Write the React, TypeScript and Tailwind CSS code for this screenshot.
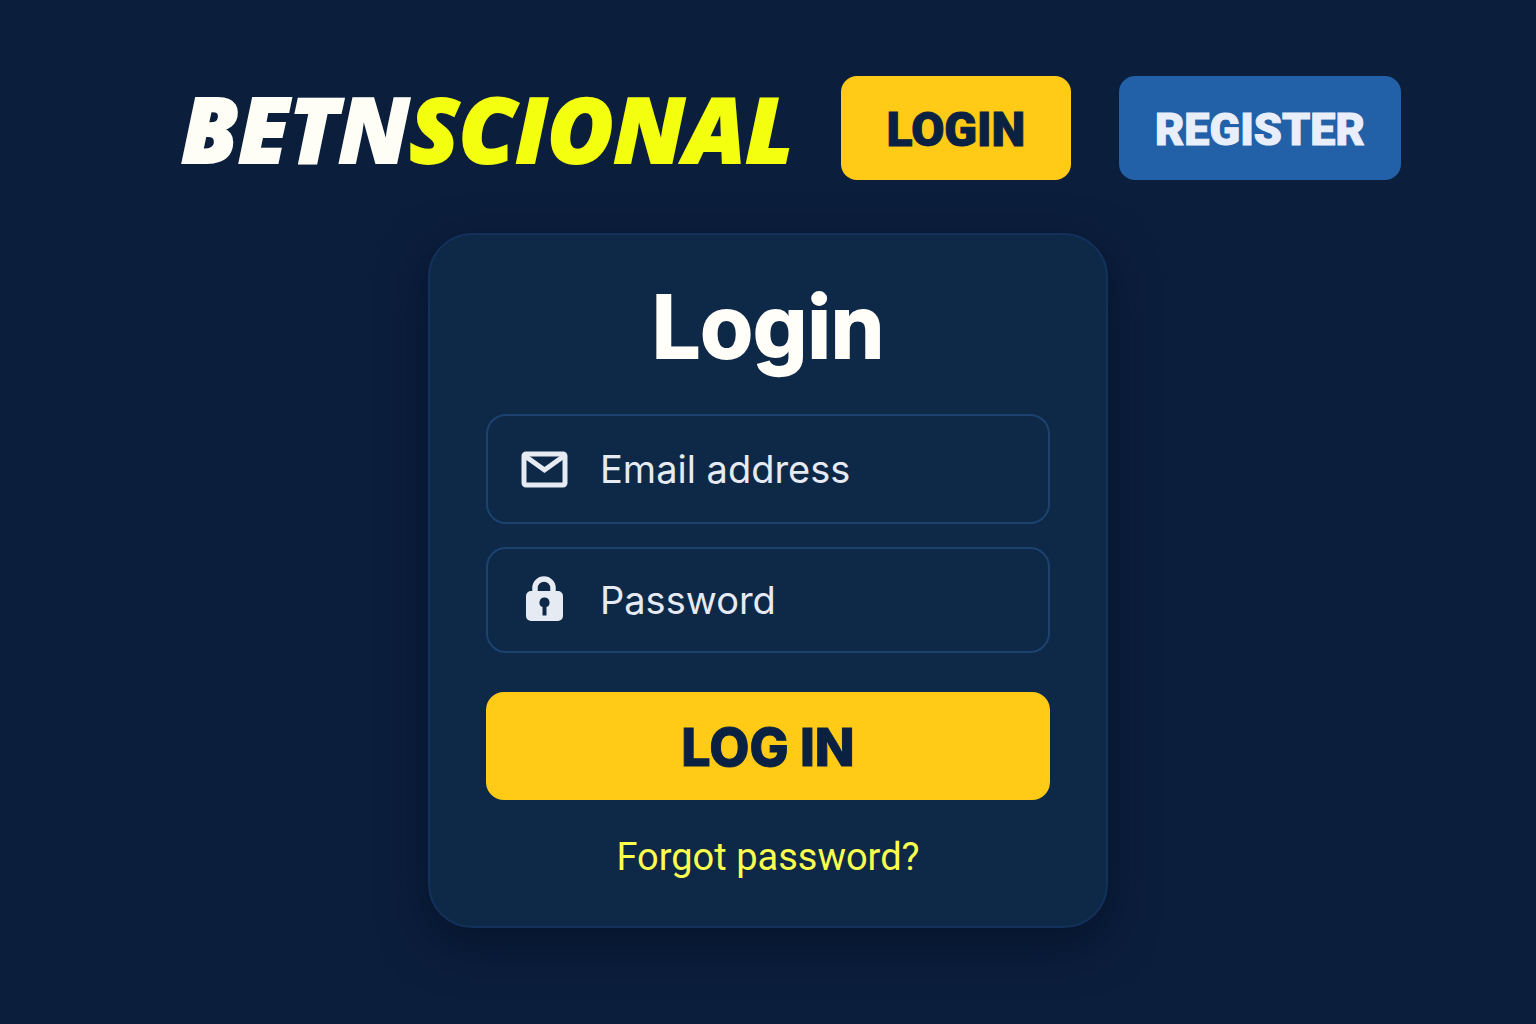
import { useState } from "react";

function MailIcon() {
  return (
    <svg viewBox="0 -1 48 38" className="h-[38px] w-12" aria-hidden="true">
      <rect
        x="4"
        y="3"
        width="41"
        height="31"
        rx="2"
        fill="none"
        stroke="#e6eaf3"
        strokeWidth="5"
      />
      <path
        d="M5 5 24.500 19 44 5"
        fill="none"
        stroke="#e6eaf3"
        strokeWidth="5"
      />
    </svg>
  );
}

function LockIcon() {
  return (
    <svg viewBox="0 2 48 48" className="size-12" aria-hidden="true">
      <path
        d="M15 20v-6a9 9 0 0 1 18 0v6"
        fill="none"
        stroke="#e6eaf3"
        strokeWidth="5.500"
      />
      <path
        fill="#e6eaf3"
        fillRule="evenodd"
        d="M11 17h27a5 5 0 0 1 5 5v20a5 5 0 0 1-5 5H11a5 5 0 0 1-5-5V22a5 5 0 0 1 5-5ZM24.500 23.500a5 5 0 0 0-2 9.600v8.500h4v-8.500a5 5 0 0 0-2-9.600Z"
      />
    </svg>
  );
}

export default function App() {
  const [email, setEmail] = useState("");
  const [password, setPassword] = useState("");

  return (
    <div className="min-h-screen bg-[#0b1e3c] px-6 pt-[76px] pb-24 font-['Inter',sans-serif]">
      {/* Top bar */}
      <header className="flex items-center justify-center pl-[46px]">
        <a
          href="#"
          className="mr-12 font-['Open_Sans',sans-serif] text-[90px] leading-[104px] font-extrabold text-[#fffef6] italic [-webkit-text-stroke:2px]"
        >
          BETN<span className="text-[#f4ff10]">SCIONAL</span>
        </a>
        <button
          type="button"
          className="mr-12 h-[104px] w-[230px] rounded-2xl bg-[#ffcb17] pt-1 font-['Roboto',sans-serif] text-5xl font-black text-[#0b2142] [-webkit-text-stroke:1px]"
        >
          LOGIN
        </button>
        <button
          type="button"
          className="h-[104px] w-[282px] rounded-2xl bg-[#2261a8] pt-1 font-['Roboto',sans-serif] text-[45px] font-black text-[#e9effa] [-webkit-text-stroke:1px]"
        >
          REGISTER
        </button>
      </header>

      {/* Login card */}
      <main className="mx-auto mt-[53px] w-full max-w-[680px] rounded-[44px] border-2 border-[#13315a] bg-[#0e2847] px-14 pt-11 pb-11 shadow-[0_16px_48px_rgba(3,14,34,0.6)]">
        <h1 className="text-center text-[86px] leading-[96px] font-bold text-[#fffef8] [-webkit-text-stroke:2px]">
          Login
        </h1>
        <form
          className="mt-[39px] flex flex-col"
          onSubmit={(e) => e.preventDefault()}
        >
          <label className="flex h-[110px] items-center gap-8 rounded-[20px] border-2 border-[#1c426f] px-8">
            <MailIcon />
            <input
              type="email"
              aria-label="Email address"
              placeholder="Email address"
              value={email}
              onChange={(e) => setEmail(e.target.value)}
              className="min-w-0 flex-1 bg-transparent text-[38px] text-[#e6eaf3] outline-none placeholder:text-[#e6eaf3]"
            />
          </label>
          <label className="mt-[23px] flex h-[106px] items-center gap-8 rounded-[20px] border-2 border-[#1c426f] px-8">
            <LockIcon />
            <input
              type="password"
              aria-label="Password"
              placeholder="Password"
              value={password}
              onChange={(e) => setPassword(e.target.value)}
              className="min-w-0 flex-1 bg-transparent text-[38px] text-[#e6eaf3] outline-none placeholder:text-[#e6eaf3]"
            />
          </label>
          <button
            type="submit"
            className="mt-[39px] h-[108px] rounded-[18px] bg-[#ffcb17] pt-1 text-[52px] font-extrabold text-[#0b2142] [-webkit-text-stroke:1px]"
          >
            LOG IN
          </button>
        </form>
        <a
          href="#"
          className="mt-8 block text-center font-['Roboto',sans-serif] text-[38px] leading-[50px] text-[#fbff4e]"
        >
          Forgot password?
        </a>
      </main>
    </div>
  );
}
